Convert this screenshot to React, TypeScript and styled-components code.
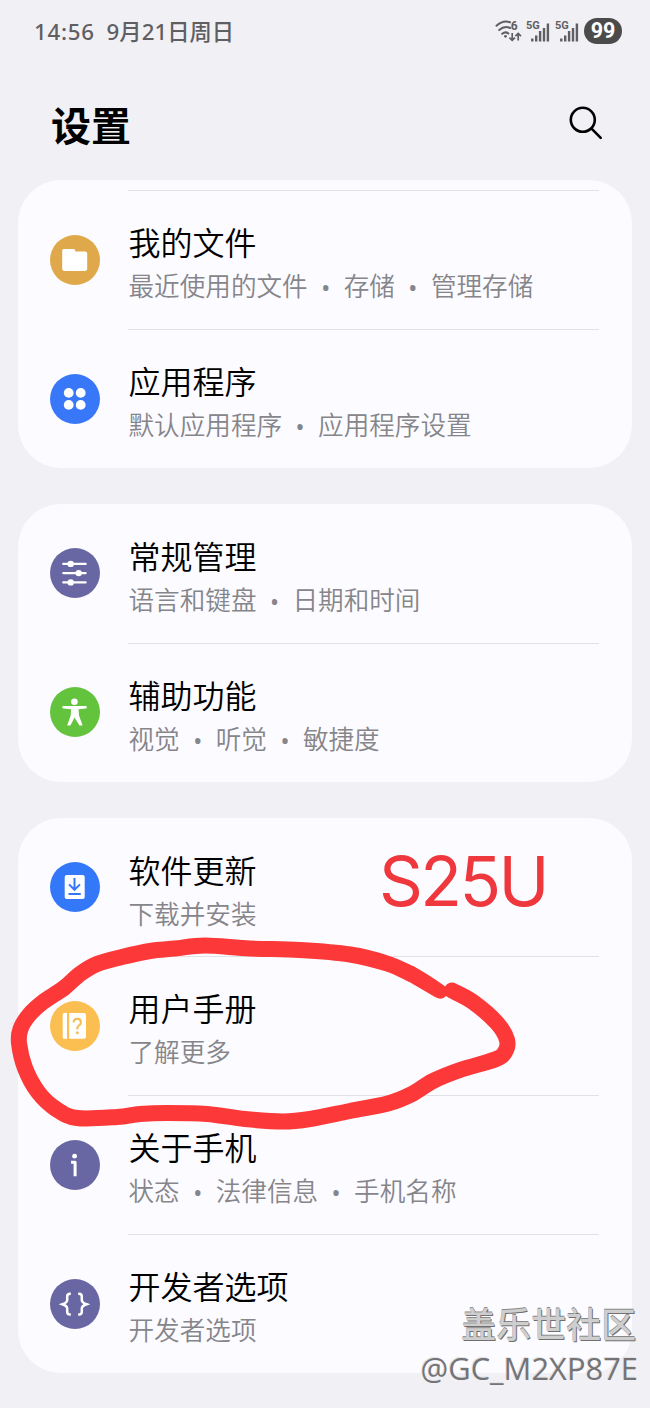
import React from "react";
import styled, { createGlobalStyle } from "styled-components";

const cjk = '"Noto Sans CJK SC", sans-serif';

const GlobalStyle = createGlobalStyle`
  * { box-sizing: border-box; }
  body {
    margin: 0;
    background: #f1f0f5;
    font-family: ${cjk};
  }
`;

const Screen = styled.div`
  position: relative;
  width: 650px;
  height: 1408px;
  overflow: hidden;
  background: #f1f0f5;
`;

const StatusBar = styled.header`
  display: flex;
  align-items: center;
  justify-content: space-between;
  height: 64px;
  padding: 0 28px 2px 34px;
`;

const Clock = styled.div`
  display: flex;
  gap: 12px;
  font: 500 22.3px/32px "Noto Sans", ${cjk};
  color: #5f5f62;
  white-space: nowrap;
  padding-top: 2px;
`;

const Time = styled.span`
  letter-spacing: 0.7px;
`;

const StatusIcons = styled.div`
  display: flex;
  align-items: center;
  gap: 4px;
`;

const Battery = styled.div`
  width: 38px;
  height: 26px;
  margin-left: 1px;
  border-radius: 13px;
  background: #4b4b4c;
  color: #fff;
  font: 700 21.5px/26px Roboto, sans-serif;
  text-align: center;
`;

const TitleBar = styled.div`
  display: flex;
  justify-content: space-between;
  align-items: center;
  height: 116px;
  padding: 4px 46px 0 51px;
`;

const PageTitle = styled.h1`
  margin: 0;
  font-size: 40px;
  line-height: 60px;
  font-weight: 700;
  color: #000;
`;

const List = styled.main`
  display: flex;
  flex-direction: column;
  gap: 36px;
  padding: 0 18px;
`;

const Card = styled.section<{ $continued?: boolean }>`
  padding-top: ${(p) => (p.$continued ? 10 : 0)}px;
  border-radius: 43px;
  background: #fcfbff;
`;

const Row = styled.div<{ $divided: boolean }>`
  display: flex;
  align-items: center;
  height: ${(p) => (p.$divided ? 139 : 138.5)}px;
  margin-right: 33px;
  padding-left: 31.5px;
`;

const Badge = styled.div<{ $color: string }>`
  flex: none;
  width: 50px;
  height: 50px;
  border-radius: 50%;
  background: ${(p) => p.$color};
  svg { display: block; }
`;

const Labels = styled.div<{ $divided: boolean }>`
  flex: 1;
  height: 100%;
  margin-left: 28.5px;
  padding: 27px 0 0 0.5px;
  border-top: ${(p) => (p.$divided ? "1.5px solid #e2e2e6" : "1px solid transparent")};
`;

const Name = styled.div`
  font-size: 32px;
  line-height: 46px;
  font-weight: 350;
  color: #000;
`;

const Summary = styled.div`
  display: flex;
  padding-top: 1px;
  font-size: 25.6px;
  line-height: 40px;
  font-weight: 350;
  color: #85858a;
  white-space: nowrap;
`;

const Separator = styled.span`
  width: 36px;
  padding-top: 2px;
  font-family: "Noto Sans", sans-serif;
  font-size: 32px;
  line-height: 40px;
  text-align: center;
`;

const Markup = styled.svg`
  position: absolute;
  top: 0;
  left: 0;
  pointer-events: none;
`;

const Model = styled.div`
  position: absolute;
  left: 379px;
  top: 840.5px;
  font: 400 68.5px/82px Inter, sans-serif;
  letter-spacing: -2.6px;
  color: #ee383d;
`;

const Watermark = styled.div`
  position: absolute;
  right: 13px;
  bottom: 18px;
  display: flex;
  flex-direction: column;
  align-items: flex-end;
  white-space: nowrap;
`;

const Community = styled.div`
  font: 500 35px/46px ${cjk};
  color: #cfcecf;
  text-shadow: 1px 1px 0 #707070, 0 -1px 0 #888;
  margin-right: 1px;
`;

const Author = styled.div`
  font: 400 30.9px/44px "Open Sans", sans-serif;
  margin-right: -1px;
  color: #747477;
  text-shadow: -1px -1px 0 #e2e2e4;
`;

const icons: Record<string, React.ReactNode> = {
  folder: (
    <path fill="#fff" d="M14.5 14.5h10q1.5 0 1.5 1.5v1.2h10q2 0 2 2V34q0 2.500-2.500 2.500h-20Q13 36.500 13 34V16q0-1.500 1.500-1.500z" />
  ),
  apps: (
    <g fill="#fff">
      <circle cx="19.5" cy="19.5" r="4.9" />
      <circle cx="31.5" cy="19.5" r="4.9" />
      <circle cx="19.5" cy="31.5" r="4.9" />
      <circle cx="31.5" cy="31.5" r="4.9" />
    </g>
  ),
  sliders: (
    <g fill="#fff">
      <path stroke="#fff" strokeWidth="2.1" strokeLinecap="round" d="M14 16.5h22.5M14 25.700h22.500M14 35h22.500" />
      <circle cx="21.5" cy="16.5" r="3.2" />
      <circle cx="29.5" cy="25.7" r="3.2" />
      <circle cx="21.5" cy="35" r="3.2" />
    </g>
  ),
  person: (
    <g fill="#fff">
      <circle cx="25.2" cy="15.3" r="3.3" />
      <path d="M14 19.6h22.6q1 0 1 1.2t-1 1.2l-7.3.8.5 6.3 3.4 9.2q.1.8-.9.9h-1.5q-.6 0-.8-.6L25.3 31l-3.8 7.6q-.2.6-.9.6h-1.8q-.9-.1-.6-.9l3.3-9.2.4-6.3-7.9-.8q-1-.1-1-1.2t1-1.2z" />
    </g>
  ),
  update: (
    <g>
      <rect x="15.5" y="13.5" width="20" height="24" rx="2" fill="#fff" />
      <path fill="none" stroke="#3478fa" strokeWidth="2" d="M25.3 16.5v11.7M19.8 23l5.5 5.4 5.5-5.4M19.3 32.7h12.3" />
    </g>
  ),
  manual: (
    <g>
      <path fill="#fff" d="M15 12.5h2.8v25.8H15q-1.5 0-1.5-1.5V14q0-1.5 1.5-1.5zM20 12.5h14.8q2 0 2 2v21.8q0 2-2 2H20z" />
      <path fill="none" stroke="#f5bd5a" strokeWidth="2.1" d="M24.4 22.2q0-3.7 3.7-3.7 3.6 0 3.6 3.4 0 2-1.8 3.1-1.8 1.2-1.8 2.7v1.3" />
      <circle cx="28.1" cy="32.4" r="1.5" fill="#f5bd5a" />
    </g>
  ),
  info: (
    <g fill="none" stroke="#fff">
      <circle cx="25.4" cy="16.8" r="2.4" fill="#fff" stroke="none" />
      <path strokeWidth="3" strokeLinejoin="round" d="M21.8 22.8h4.1v14" />
    </g>
  ),
  braces: (
    <path
      fill="none"
      stroke="#fff"
      strokeWidth="2.5"
      d="M21.6 15.4h-.8q-2.8 0-2.8 2.8v3.3q0 2.6-4.8 4.3 4.8 1.7 4.8 4.2v3.3q0 2.8 2.8 2.8h.8M29 15.4h.8q2.8 0 2.8 2.8v3.3q0 2.6 4.8 4.3-4.8 1.7-4.8 4.2v3.3q0 2.8-2.8 2.8H29"
    />
  ),
};

type Item = { name: string; summary: string[]; icon: string; color: string };

const groups: Item[][] = [
  [
    { name: "我的文件", summary: ["最近使用的文件", "存储", "管理存储"], icon: "folder", color: "#dfa94b" },
    { name: "应用程序", summary: ["默认应用程序", "应用程序设置"], icon: "apps", color: "#3878f8" },
  ],
  [
    { name: "常规管理", summary: ["语言和键盘", "日期和时间"], icon: "sliders", color: "#6967a3" },
    { name: "辅助功能", summary: ["视觉", "听觉", "敏捷度"], icon: "person", color: "#63c33c" },
  ],
  [
    { name: "软件更新", summary: ["下载并安装"], icon: "update", color: "#3478fa" },
    { name: "用户手册", summary: ["了解更多"], icon: "manual", color: "#fbbe50" },
    { name: "关于手机", summary: ["状态", "法律信息", "手机名称"], icon: "info", color: "#6967a3" },
    { name: "开发者选项", summary: ["开发者选项"], icon: "braces", color: "#6967a3" },
  ],
];

type Point = [number, number];

const loop: Point[] = [
  [411, 974], [387, 963.5], [350, 954.5], [300, 950], [250, 948.5], [205, 945.5], [175, 948.5], [150, 951],
  [122, 957], [97, 964], [80, 974], [64, 988], [43, 1002], [29, 1015], [20.5, 1029], [19, 1043], [25, 1068],
  [38, 1092], [56, 1109], [77, 1118], [117, 1117], [140, 1114], [167, 1113], [207, 1114], [245, 1119],
  [283, 1121.5], [310, 1119], [350, 1111], [388, 1103.5], [412, 1094], [433, 1081], [460, 1070], [495, 1059.5],
  [505, 1052], [507, 1040], [497, 1023], [473, 1002], [452, 990.5],
];

/* Catmull-Rom spline through the points, written as cubic segments. */
function smooth(points: Point[]) {
  let d = `M${points[0][0]} ${points[0][1]}`;
  for (let i = 0; i < points.length - 1; i++) {
    const a = points[Math.max(i - 1, 0)];
    const b = points[i];
    const c = points[i + 1];
    const e = points[Math.min(i + 2, points.length - 1)];
    d += `C${b[0] + (c[0] - a[0]) / 6} ${b[1] + (c[1] - a[1]) / 6} ${c[0] - (e[0] - b[0]) / 6} ${c[1] - (e[1] - b[1]) / 6} ${c[0]} ${c[1]}`;
  }
  return d;
}

function WifiIcon() {
  return (
    <svg width="27" height="26" viewBox="0 0 27 26" fill="none" stroke="#5f5f62" strokeWidth="2">
      <path d="M1.5 7.8Q8 1.8 15 4.3M4.2 12q5.4-4.9 11-2M7.2 15.8q3.3-2.7 6.2-.3" strokeLinecap="round" />
      <circle cx="10.5" cy="18.3" r="1.4" fill="#5f5f62" stroke="none" />
      <path strokeWidth="1.7" d="M17.2 15v7M14.4 19.6l2.8 2.8 2.8-2.8M23.2 22.5v-7M20.4 18.2l2.8-2.8 2.8 2.8" />
      <text x="15.8" y="11.5" fill="#5f5f62" stroke="none" fontFamily="Roboto, sans-serif" fontWeight="700" fontSize="12">6</text>
    </svg>
  );
}

function SignalIcon() {
  return (
    <svg width="24.5" height="26" viewBox="0 0 24.5 26" fill="none" stroke="#5f5f62">
      <text x="0" y="10.8" fill="#5f5f62" stroke="none" fontFamily="Roboto, sans-serif" fontWeight="700" fontSize="11">5G</text>
      <path strokeWidth="2.4" d="M6.300 20.500v3M10.200 17.500v6M14.100 13v10.500M18 10v13.500M21.900 5.500v18" />
    </svg>
  );
}

function SettingRow({ item, divided }: { item: Item; divided: boolean }) {
  return (
    <Row $divided={divided}>
      <Badge $color={item.color}>
        <svg width="50" height="50" viewBox="0.8 0.6 50 50">{icons[item.icon]}</svg>
      </Badge>
      <Labels $divided={divided}>
        <Name>{item.name}</Name>
        <Summary>
          {item.summary.map((part, i) => (
            <React.Fragment key={part}>
              {i > 0 && <Separator>•</Separator>}
              <span>{part}</span>
            </React.Fragment>
          ))}
        </Summary>
      </Labels>
    </Row>
  );
}

export default function App() {
  return (
    <Screen>
      <GlobalStyle />
      <StatusBar>
        <Clock>
          <Time>14:56</Time>
          <span>9月21日周日</span>
        </Clock>
        <StatusIcons>
          <WifiIcon />
          <SignalIcon />
          <SignalIcon />
          <Battery>99</Battery>
        </StatusIcons>
      </StatusBar>
      <TitleBar>
        <PageTitle>设置</PageTitle>
        <svg width="36" height="36" viewBox="0 0 36 36" fill="none" stroke="#000" strokeWidth="2.6" strokeLinecap="round">
          <circle cx="14.8" cy="13.8" r="12" />
          <path d="M23.8 22.8l8.9 9" />
        </svg>
      </TitleBar>
      <List>
        {groups.map((group, g) => (
          <Card key={g} $continued={g === 0}>
            {group.map((item, i) => (
              <SettingRow key={item.name} item={item} divided={g === 0 || i > 0} />
            ))}
          </Card>
        ))}
      </List>
      <Markup width="650" height="1408" viewBox="0 0 650 1408">
        <path fill="none" stroke="#fd3838" strokeWidth="16" strokeLinecap="round" strokeLinejoin="round" d={smooth(loop)} />
        <path fill="#fd3838" d="M413 966Q428 974 446 987V996Q442 1001 435 997L406 980z" />
      </Markup>
      <Model>S25U</Model>
      <Watermark>
        <Community>盖乐世社区</Community>
        <Author>@GC_M2XP87E</Author>
      </Watermark>
    </Screen>
  );
}
